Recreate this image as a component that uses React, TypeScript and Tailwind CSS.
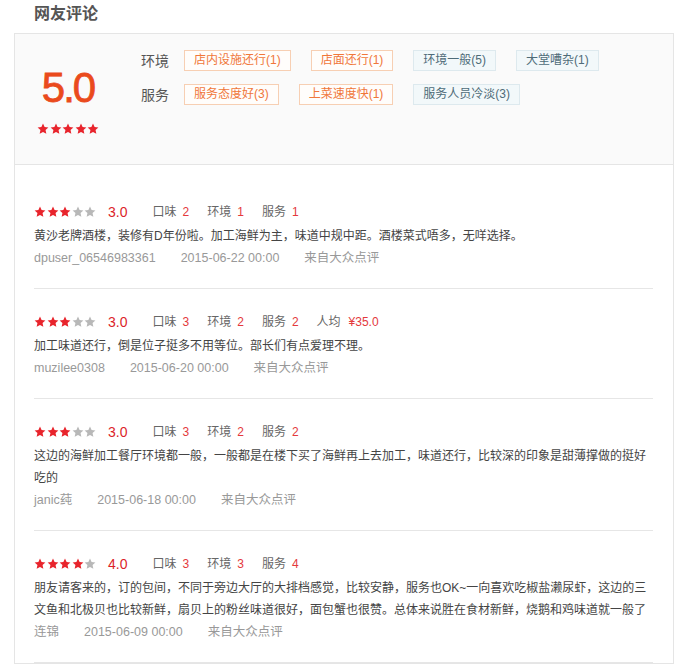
import React from 'react';

type Review = {
  stars: number;
  score: string;
  taste: string;
  env: string;
  service: string;
  price?: string;
  text: string;
  user: string;
  time: string;
};

const reviews: Review[] = [
  {
    stars: 3,
    score: '3.0',
    taste: '2',
    env: '1',
    service: '1',
    text: '黄沙老牌酒楼，装修有D年份啦。加工海鲜为主，味道中规中距。酒楼菜式唔多，无咩选择。',
    user: 'dpuser_06546983361',
    time: '2015-06-22 00:00',
  },
  {
    stars: 3,
    score: '3.0',
    taste: '3',
    env: '2',
    service: '2',
    price: '¥35.0',
    text: '加工味道还行，倒是位子挺多不用等位。部长们有点爱理不理。',
    user: 'muzilee0308',
    time: '2015-06-20 00:00',
  },
  {
    stars: 3,
    score: '3.0',
    taste: '3',
    env: '2',
    service: '2',
    text: '这边的海鲜加工餐厅环境都一般，一般都是在楼下买了海鲜再上去加工，味道还行，比较深的印象是甜薄撑做的挺好吃的',
    user: 'janic莼',
    time: '2015-06-18 00:00',
  },
  {
    stars: 4,
    score: '4.0',
    taste: '3',
    env: '3',
    service: '4',
    text: '朋友请客来的，订的包间，不同于旁边大厅的大排档感觉，比较安静，服务也OK~一向喜欢吃椒盐濑尿虾，这边的三文鱼和北极贝也比较新鲜，扇贝上的粉丝味道很好，面包蟹也很赞。总体来说胜在食材新鲜，烧鹅和鸡味道就一般了',
    user: '连锦',
    time: '2015-06-09 00:00',
  },
];

const Star = ({ on }: { on: boolean }) => (
  <svg viewBox="0 0 24 24" className={`w-3 h-3 ${on ? 'fill-[#e8242c]' : 'fill-[#b8b8b8]'}`}>
    <path d="M12 1.2l3.2 7 7.6.8-5.7 5.1 1.6 7.5L12 17.8l-6.7 3.8 1.6-7.5-5.7-5.1 7.6-.8z" />
  </svg>
);

const Stars = ({ n }: { n: number }) => (
  <div className="flex gap-[0.5px]">
    {[0, 1, 2, 3, 4].map((i) => (
      <Star key={i} on={i < n} />
    ))}
  </div>
);

const OrangeTag = ({ children }: { children: React.ReactNode }) => (
  <span className="h-[21px] px-[9px] leading-[19px] text-xs border border-[#f7cfb3] bg-[#fffdfb] text-[#f0773a]">
    {children}
  </span>
);

const BlueTag = ({ children }: { children: React.ReactNode }) => (
  <span className="h-[21px] px-[9px] leading-[19px] text-xs border border-[#dde9ee] bg-[#f2f8fa] text-[#4e6b78]">
    {children}
  </span>
);

const SubScore = ({ label, value }: { label: string; value: string }) => (
  <span className="mr-[18px] text-xs text-[#666]">
    {label}
    <span className="ml-[6px] text-[#e4393c]">{value}</span>
  </span>
);

export default function App() {
  return (
    <div className="w-[688px] h-[670px] overflow-hidden bg-white font-['Liberation_Sans','Noto_Sans_CJK_SC',sans-serif]">
      {/* Title */}
      <div className="h-[33px] pl-[34px] leading-[27px] text-base font-bold text-[#555]">网友评论</div>

      <div className="mx-[14px] border border-[#e5e5e5]">
        {/* Summary */}
        <div className="h-[131px] flex bg-[#fafafa] border-b border-[#e5e5e5]">
          <div className="w-[106px] pt-[30px] flex flex-col items-center">
            <div className="text-[42px] leading-[48px] tracking-[-2px] text-[#ea4a1c] [-webkit-text-stroke:0.8px_#ea4a1c]">5.0</div>
            <div className="mt-[11px]">
              <Stars n={5} />
            </div>
          </div>
          <div className="ml-[20px] pt-[16px] flex flex-col gap-[13px]">
            <div className="flex items-center">
              <span className="w-[43px] text-sm text-[#555]">环境</span>
              <div className="flex gap-[20px]">
                <OrangeTag>店内设施还行(1)</OrangeTag>
                <OrangeTag>店面还行(1)</OrangeTag>
                <BlueTag>环境一般(5)</BlueTag>
                <BlueTag>大堂嘈杂(1)</BlueTag>
              </div>
            </div>
            <div className="flex items-center">
              <span className="w-[43px] text-sm text-[#555]">服务</span>
              <div className="flex gap-[20px]">
                <OrangeTag>服务态度好(3)</OrangeTag>
                <OrangeTag>上菜速度快(1)</OrangeTag>
                <BlueTag>服务人员冷淡(3)</BlueTag>
              </div>
            </div>
          </div>
        </div>

        {/* Review list */}
        <div className="pt-[14px] pl-[19px] pr-[20px]">
          {reviews.map((r, i) => (
            <div key={i} className="pt-[22px] pb-[20px] border-b border-[#e6e6e6]">
              <div className="h-[22px] flex items-center">
                <Stars n={r.stars} />
                <span className="ml-[12px] mr-[25px] text-sm text-[#dc1f2a]">{r.score}</span>
                <SubScore label="口味" value={r.taste} />
                <SubScore label="环境" value={r.env} />
                <SubScore label="服务" value={r.service} />
                {r.price && (
                  <span className="text-xs text-[#666]">
                    人均
                    <span className="ml-[8px] text-[#e4393c]">{r.price}</span>
                  </span>
                )}
              </div>
              <p className="mt-[2px] text-xs leading-[22px] text-[#444]">{r.text}</p>
              <div className="mt-[1px] flex gap-[25px] text-[12.5px] leading-[20px] text-[#999]">
                <span>{r.user}</span>
                <span>{r.time}</span>
                <span>来自大众点评</span>
              </div>
            </div>
          ))}
        </div>
      </div>
    </div>
  );
}
